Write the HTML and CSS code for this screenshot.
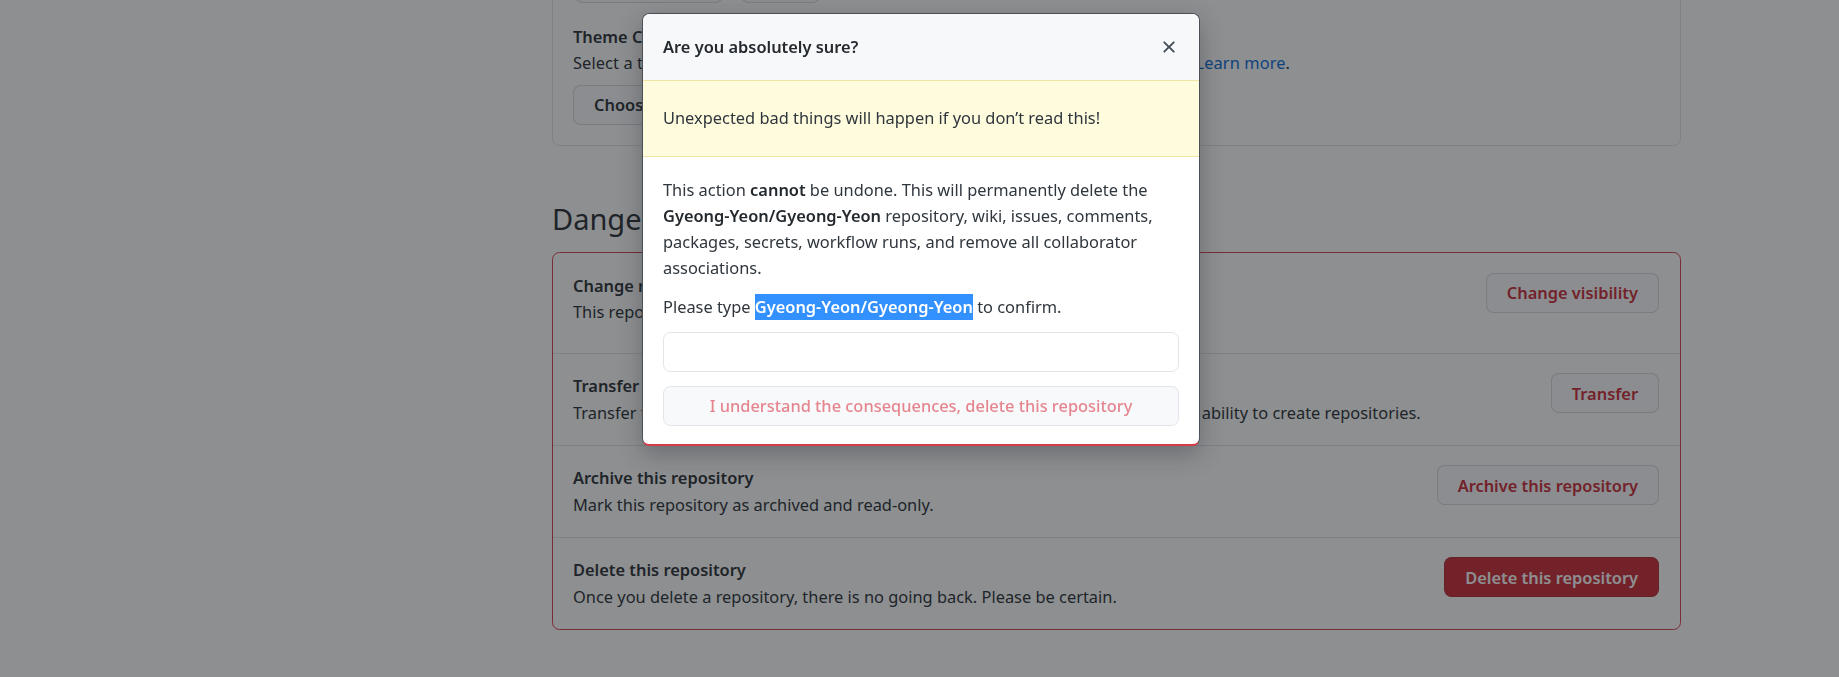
FILE: index.html
```html
<!DOCTYPE html>
<html lang="en">
<head>
<meta charset="utf-8">
<title>Settings · Danger Zone</title>
<link rel="stylesheet" href="styles.css">
</head>
<body>
<div class="layout">
  <aside class="sidebar"></aside>
  <main class="main">
    <section class="box pages">
      <div class="btn-row">
        <button class="btn">Branch: main</button>
        <button class="btn">Save</button>
      </div>
      <h4 class="item-title">Theme Chooser</h4>
      <p class="item-desc">Select a theme to publish your site with a Jekyll theme using the master branch. <a class="link" href="#">Learn more</a>.</p>
      <button class="btn">Choose a theme</button>
    </section>

    <h2 class="subhead">Danger Zone</h2>
    <section class="box danger">
      <div class="row row-first">
        <div class="row-text">
          <h4 class="item-title">Change repository visibility</h4>
          <p class="item-desc">This repository is currently public.</p>
        </div>
        <button class="btn btn-outline-danger">Change visibility</button>
      </div>
      <div class="row">
        <div class="row-text">
          <h4 class="item-title">Transfer ownership</h4>
          <p class="item-desc">Transfer this repository to another user or to an organization where you have the ability to create repositories.</p>
        </div>
        <button class="btn btn-outline-danger">Transfer</button>
      </div>
      <div class="row">
        <div class="row-text">
          <h4 class="item-title">Archive this repository</h4>
          <p class="item-desc">Mark this repository as archived and read-only.</p>
        </div>
        <button class="btn btn-outline-danger">Archive this repository</button>
      </div>
      <div class="row">
        <div class="row-text">
          <h4 class="item-title">Delete this repository</h4>
          <p class="item-desc">Once you delete a repository, there is no going back. Please be certain.</p>
        </div>
        <button class="btn btn-danger">Delete this repository</button>
      </div>
    </section>
  </main>
</div>

<div class="overlay"></div>

<div class="modal" role="dialog">
  <div class="modal-header">
    <h3 class="modal-title">Are you absolutely sure?</h3>
    <button class="modal-close" aria-label="Close">
      <svg viewBox="0 0 16 16" width="20" height="20"><path fill="currentColor" d="M3.72 3.72a.75.75 0 0 1 1.06 0L8 6.94l3.22-3.22a.749.749 0 0 1 1.275.326.749.749 0 0 1-.215.734L9.06 8l3.22 3.22a.749.749 0 0 1-.326 1.275.749.749 0 0 1-.734-.215L8 9.06l-3.22 3.22a.751.751 0 0 1-1.042-.018.751.751 0 0 1-.018-1.042L6.94 8 3.72 4.78a.75.75 0 0 1 0-1.06Z"/></svg>
    </button>
  </div>
  <div class="flash-warn">Unexpected bad things will happen if you don’t read this!</div>
  <div class="modal-body">
    <p class="modal-p">This action <strong>cannot</strong> be undone. This will permanently delete the <strong>Gyeong-Yeon/Gyeong-Yeon</strong> repository, wiki, issues, comments, packages, secrets, workflow runs, and remove all collaborator associations.</p>
    <p class="modal-p">Please type <span class="selected">Gyeong-Yeon/Gyeong-Yeon</span> to confirm.</p>
    <input class="form-control" type="text" aria-label="Repository name">
    <button class="btn btn-block btn-disabled-danger">I understand the consequences, delete this repository</button>
  </div>
</div>
</body>
</html>
```

FILE: styles.css
```css
* { box-sizing: border-box; }

html, body {
  margin: 0;
  height: 100%;
  overflow: hidden;
}

body {
  background: #ffffff;
  color: #24292e;
  font-family: "Noto Sans", "Open Sans", sans-serif;
  font-size: 16.4px;
  line-height: 26.25px;
}

.layout {
  display: grid;
  grid-template-columns: 552px 1129px;
}

.main {
  margin-top: -58px;
}

.box {
  border: 1px solid #e1e4e8;
  border-radius: 7.5px;
}

.pages {
  padding: 20px;
}

.btn-row {
  display: flex;
  gap: 18px;
  padding-left: 2px;
}

.item-title {
  margin: 0;
  font-size: 16.4px;
  font-weight: 600;
  line-height: 26.25px;
}

.pages .item-title {
  margin-top: 21px;
}

.item-desc {
  margin: 0;
}

.pages .item-desc {
  margin-bottom: 8px;
  letter-spacing: 0.09px;
}

.link {
  color: #0366d6;
  text-decoration: none;
}

.btn {
  display: inline-flex;
  align-items: center;
  justify-content: center;
  height: 40px;
  padding: 0 20px;
  border: 1px solid rgba(27, 31, 35, 0.15);
  border-radius: 7.5px;
  background: #fafbfc;
  color: #24292e;
  font-family: inherit;
  font-size: 16.4px;
  font-weight: 600;
  white-space: nowrap;
}

.subhead {
  margin: 50px 0 11px;
  font-size: 29px;
  font-weight: 400;
  line-height: 45px;
}

.danger {
  border-color: #d73a49;
}

.row {
  display: flex;
  justify-content: space-between;
  align-items: flex-start;
  gap: 20px;
  padding: 19.3px 21px 19.3px 20px;
  border-top: 1px solid #e1e4e8;
}

.row-first {
  border-top: 0;
  padding-top: 20px;
  padding-bottom: 28px;
}

.btn-outline-danger {
  color: #cb2431;
}

.btn-danger {
  background: #cb2431;
  color: #ffffff;
}

.overlay {
  position: fixed;
  inset: 0;
  background: rgba(27, 31, 35, 0.5);
}

.modal {
  position: fixed;
  left: 642px;
  top: 13px;
  width: 558px;
  background: #ffffff;
  border: 1px solid #4a5058;
  border-bottom: 2px solid #d73a49;
  border-radius: 7.5px;
  overflow: hidden;
  box-shadow: 0 8px 24px rgba(27, 31, 35, 0.3);
}

.modal-header {
  display: flex;
  justify-content: space-between;
  align-items: center;
  padding: 20px;
  background: #f6f8fa;
}

.modal-title {
  margin: 0;
  font-size: 16.4px;
  font-weight: 600;
  line-height: 26.25px;
}

.modal-close {
  display: flex;
  padding: 0;
  margin: 0;
  border: 0;
  background: transparent;
  color: #444d56;
}

.flash-warn {
  padding: 24px 20px;
  background: #fffbdd;
  border-top: 1px solid #f0e3a4;
  border-bottom: 1px solid #f0e3a4;
  color: #2f363d;
}

.modal-body {
  padding: 20px 20px 18px;
}

.modal-p {
  margin: 0 0 12px;
  color: #2f363d;
}

.modal-p strong {
  font-weight: 600;
  color: #24292e;
}

.selected {
  display: inline-block;
  background: #3390ff;
  color: #ffffff;
  font-weight: 600;
}

.form-control {
  display: block;
  width: 100%;
  height: 40px;
  margin: 0 0 14px;
  border: 1px solid #e1e4e8;
  border-radius: 7.5px;
  background: #ffffff;
  font-family: inherit;
  font-size: 16.4px;
}

.btn-block {
  display: flex;
  width: 100%;
}

.btn-disabled-danger {
  color: #e5858f;
  background: #f8f9fb;
  border-color: #e1e4e8;
  font-weight: 500;
}
```
